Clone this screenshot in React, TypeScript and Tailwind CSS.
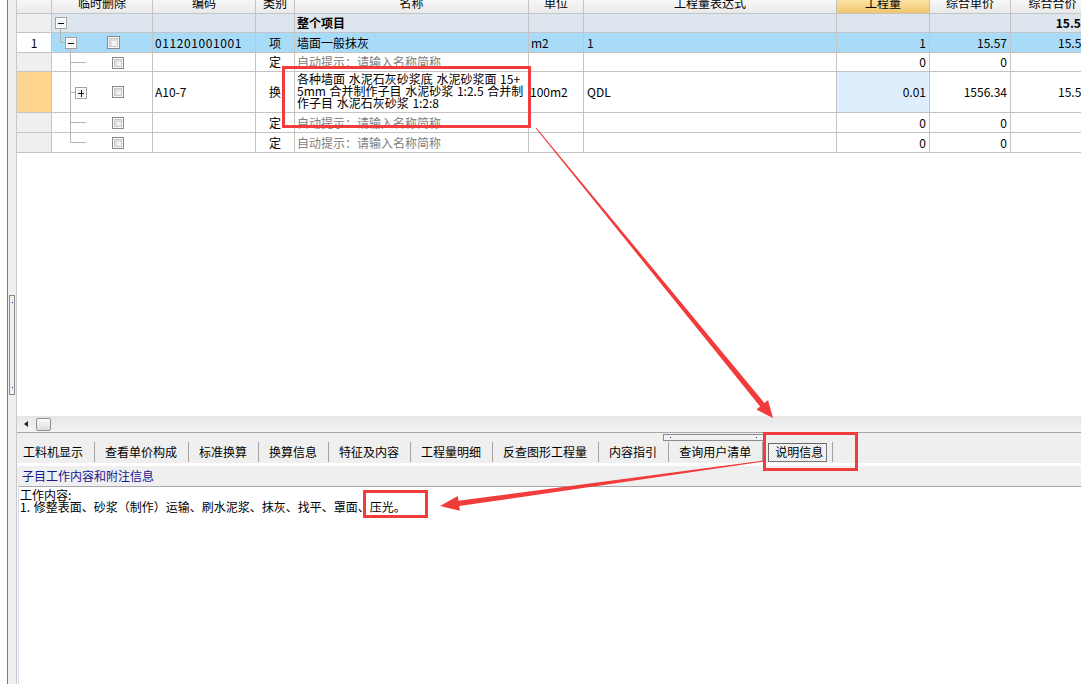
import React from "react";
import clsx from "clsx";

const W = [
  "w-[35px]",
  "w-[101px]",
  "w-[103px]",
  "w-[39px]",
  "w-[234px]",
  "w-[55px]",
  "w-[253px]",
  "w-[93px]",
  "w-[81px]",
  "w-[84px]",
];

const HEAD = ["", "临时删除", "编码", "类别", "名称", "单位", "工程量表达式", "工程量", "综合单价", "综合合价"];

const TABS = ["工料机显示", "查看单价构成", "标准换算", "换算信息", "特征及内容", "工程量明细", "反查图形工程量", "内容指引", "查询用户清单"];

function C({ i, className, children }: { i: number; className?: string; children?: React.ReactNode }) {
  return (
    <div className={clsx("shrink-0 h-full border-r border-[#c4c4c4] flex items-center overflow-hidden whitespace-nowrap", W[i], className)}>
      {children}
    </div>
  );
}

function Box({ x, y, plus }: { x: number; y: number; plus?: boolean }) {
  return (
    <g>
      <rect x={x + 0.5} y={y + 0.5} width={11} height={11} fill="#f3f3f3" stroke="#a2a2a2" />
      <rect x={x + 1.5} y={y + 1.5} width={9} height={9} fill="none" stroke="#ffffff" />
      <line x1={x + 3} x2={x + 9} y1={y + 6.5} y2={y + 6.5} stroke="#111" />
      {plus && <line x1={x + 6.5} x2={x + 6.5} y1={y + 3} y2={y + 10} stroke="#111" />}
    </g>
  );
}

function Check({ x, y, s = 12 }: { x: number; y: number; s?: number }) {
  return (
    <g>
      <rect x={x + 0.5} y={y + 0.5} width={s - 1} height={s - 1} fill="#f7f7f7" stroke="#8a8a8a" />
      <rect x={x + 2.5} y={y + 2.5} width={s - 5} height={s - 5} fill="#dedede" stroke="#c8c8c8" />
      <rect x={x + 5} y={y + 5} width={s - 8} height={s - 8} fill="#f2f2f2" />
    </g>
  );
}

// tree / checkbox drawing in the 临时删除 column
function Tree({ row, h }: { row: number; h: number }) {
  const line = "#b4b4b4";
  return (
    <svg width={101} height={h} className="block">
      {row === 0 && (
        <>
          <line x1={8.5} x2={8.5} y1={14} y2={h} stroke={line} />
          <Box x={3} y={3} />
        </>
      )}
      {row === 1 && (
        <>
          <line x1={8.5} x2={8.5} y1={0} y2={9.5} stroke={line} />
          <line x1={8.5} x2={13} y1={9.5} y2={9.5} stroke={line} />
          <line x1={18.5} x2={18.5} y1={15} y2={h} stroke={line} />
          <Box x={13} y={4} />
          <Check x={55} y={3} s={13} />
        </>
      )}
      {(row === 2 || row === 4 || row === 5) && (
        <>
          <line x1={18.5} x2={18.5} y1={0} y2={row === 5 ? 9.5 : h} stroke={line} />
          <line x1={18.5} x2={34} y1={9.5} y2={9.5} stroke={line} />
          <Check x={60} y={4} />
        </>
      )}
      {row === 3 && (
        <>
          <line x1={18.5} x2={18.5} y1={0} y2={h} stroke={line} />
          <line x1={18.5} x2={23} y1={20.5} y2={20.5} stroke={line} />
          <Box x={23} y={15} plus />
          <Check x={60} y={14} />
        </>
      )}
    </svg>
  );
}

function arrow(x1: number, y1: number, x2: number, y2: number, w0: number, w1: number, hl: number, hw: number) {
  const dx = x2 - x1;
  const dy = y2 - y1;
  const L = Math.hypot(dx, dy);
  const ux = dx / L;
  const uy = dy / L;
  const nx = -uy;
  const ny = ux;
  const bx = x2 - ux * hl;
  const by = y2 - uy * hl;
  const p = [
    [x1 + (nx * w0) / 2, y1 + (ny * w0) / 2],
    [bx + (nx * w1) / 2, by + (ny * w1) / 2],
    [bx + (nx * hw) / 2, by + (ny * hw) / 2],
    [x2, y2],
    [bx - (nx * hw) / 2, by - (ny * hw) / 2],
    [bx - (nx * w1) / 2, by - (ny * w1) / 2],
    [x1 - (nx * w0) / 2, y1 - (ny * w0) / 2],
  ];
  return p.map((q) => q.map((v) => v.toFixed(1)).join(",")).join(" ");
}

const hint = "自动提示：请输入名称简称";

export default function App() {
  return (
    <div className="relative w-[1081px] h-[684px] overflow-hidden bg-white flex text-[12px] text-black font-['Noto_Sans_CJK_SC',sans-serif]">
      <div className="w-[7px] shrink-0 bg-white" />
      <div className="w-[10px] shrink-0 border-l border-r border-l-[#7c7c7c] border-r-[#c9c9c9] bg-[#efefef] pt-[295px] px-[1px]">
        <div className="h-[100px] border border-[#8a8a8a] bg-[#f0f0f0] flex flex-col justify-between items-center py-[6px]">
          <span className="w-[1px] h-[1px] bg-[#1a1aa0]" />
          <span className="w-[1px] h-[1px] bg-[#1a1aa0]" />
        </div>
      </div>

      <div className="flex-1 min-w-0 flex flex-col">
        {/* grid */}
        <div className="h-[416px] shrink-0 bg-white overflow-hidden">
          <div className="w-[1078px]">
            <div className="flex h-[14px] border-b border-[#c4c4c4] bg-linear-to-b from-[#f8f8f8] to-[#e9e9e9]">
              {HEAD.map((t, i) => (
                <C key={i} i={i} className={clsx("items-start justify-center", i === 7 && "bg-linear-to-b from-[#fae3a6] to-[#f1c56a]")}>
                  <span className="leading-[12px] -mt-[3px]">{t}</span>
                </C>
              ))}
            </div>

            {/* 整个项目 */}
            <div className="flex h-[19px] border-b border-[#c4c4c4] bg-[#dde5ef]">
              <C i={0} className="bg-[#efefef]" />
              <C i={1}>
                <Tree row={0} h={18} />
              </C>
              <C i={2} />
              <C i={3} />
              <C i={4} className="pl-[2px] font-bold">整个项目</C>
              <C i={5} />
              <C i={6} />
              <C i={7} />
              <C i={8} />
              <C i={9} className="justify-end pr-[6px] font-bold">15.57</C>
            </div>

            {/* 清单 */}
            <div className="flex h-[20px] border-b border-[#c4c4c4] bg-[#a8dbf8]">
              <C i={0} className="bg-white justify-center">1</C>
              <C i={1}>
                <Tree row={1} h={19} />
              </C>
              <C i={2} className="pl-[2px] tracking-[0.6px]">011201001001</C>
              <C i={3} className="justify-center">项</C>
              <C i={4} className="pl-[2px]">墙面一般抹灰</C>
              <C i={5} className="pl-[2px]">m2</C>
              <C i={6} className="pl-[3px]">1</C>
              <C i={7} className="justify-end pr-[3px]">1</C>
              <C i={8} className="justify-end pr-[3px]">15.57</C>
              <C i={9} className="justify-end pr-[6px]">15.57</C>
            </div>

            <div className="flex h-[19px] border-b border-[#c4c4c4]">
              <C i={0} className="bg-[#efefef]" />
              <C i={1}>
                <Tree row={2} h={18} />
              </C>
              <C i={2} />
              <C i={3} className="justify-center">定</C>
              <C i={4} className="pl-[2px] text-[#808080]">{hint}</C>
              <C i={5} />
              <C i={6} />
              <C i={7} className="justify-end pr-[3px]">0</C>
              <C i={8} className="justify-end pr-[3px]">0</C>
              <C i={9} />
            </div>

            <div className="flex h-[41px] border-b border-[#c4c4c4]">
              <C i={0} className="bg-[#fed690]" />
              <C i={1}>
                <Tree row={3} h={40} />
              </C>
              <C i={2} className="pl-[2px]">A10-7</C>
              <C i={3} className="justify-center">换</C>
              <C i={4} className="pl-[2px] items-start pt-[1px]">
                <div className="leading-[12px] [word-spacing:1px]">
                  <div>各种墙面 水泥石灰砂浆底 水泥砂浆面 15+</div>
                  <div>5mm 合并制作子目 水泥砂浆 1:2.5 合并制</div>
                  <div>作子目 水泥石灰砂浆 1:2:8</div>
                </div>
              </C>
              <C i={5} className="pl-[1px]">100m2</C>
              <C i={6} className="pl-[3px]">QDL</C>
              <C i={7} className="justify-end pr-[3px] bg-[#deeefd]">0.01</C>
              <C i={8} className="justify-end pr-[3px]">1556.34</C>
              <C i={9} className="justify-end pr-[6px]">15.57</C>
            </div>

            {[4, 5].map((r) => (
              <div key={r} className="flex h-[20px] border-b border-[#c4c4c4]">
                <C i={0} className="bg-[#efefef]" />
                <C i={1}>
                  <Tree row={r} h={19} />
                </C>
                <C i={2} />
                <C i={3} className="justify-center">定</C>
                <C i={4} className="pl-[2px] text-[#808080]">{hint}</C>
                <C i={5} />
                <C i={6} />
                <C i={7} className="justify-end pr-[3px]">0</C>
                <C i={8} className="justify-end pr-[3px]">0</C>
                <C i={9} />
              </div>
            ))}
          </div>
        </div>

        {/* horizontal scrollbar */}
        <div className="h-[16px] shrink-0 flex items-center bg-linear-to-b from-[#e6e6e6] to-[#f3f3f3] pl-[7px]">
          <span className="w-0 h-0 border-y-[3px] border-y-transparent border-r-[4px] border-r-[#222]" />
          <div className="ml-[8px] w-[15px] h-[13px] rounded-[2px] border border-[#8e8e8e] bg-linear-to-b from-[#fdfdfd] to-[#dcdcdc]" />
        </div>
        <div className="h-[1px] shrink-0 bg-[#a8a8a8]" />

        {/* tabs */}
        <div className="h-[30px] shrink-0 bg-[#efefef] flex flex-col">
          <div className="mt-[1px] ml-[646px] w-[101px] h-[7px] border border-[#8a8a8a] bg-[#f2f2f2] flex items-center justify-between px-[6px]">
            <span className="w-[1px] h-[1px] bg-[#1a1aa0]" />
            <span className="w-[1px] h-[1px] bg-[#1a1aa0]" />
          </div>
          <div className="h-[22px] flex items-center pl-[6px]">
            {TABS.map((t, i) => (
              <React.Fragment key={t}>
                <span className="leading-[14px]">{t}</span>
                <span className={clsx("ml-[11px] w-[1px] h-[20px] bg-[#a4a4a4]", i === TABS.length - 1 ? "mr-[5px]" : "mr-[10px]")} />
              </React.Fragment>
            ))}
            <div className="h-[19px] flex items-center pl-[6px] pr-[3px] border border-[#7a7a7a] border-t-[#6a6a6a] border-l-[#6a6a6a] bg-[repeating-conic-gradient(#ffffff_0_25%,#e2e2e2_0_50%)] bg-[length:2px_2px]">
              说明信息
            </div>
            <span className="ml-[5px] w-[1px] h-[20px] bg-[#a4a4a4]" />
          </div>
        </div>
        <div className="h-[3px] shrink-0 bg-white" />

        {/* info header */}
        <div className="h-[20px] shrink-0 bg-[#efefef] flex items-center pl-[5px] text-[#161690]">子目工作内容和附注信息</div>

        {/* content */}
        <div className="flex-1 border-t border-[#a8a8a8] ml-[1px] border-l border-l-[#dad8ee] pl-[1px] pt-[2px] leading-[12px] [word-spacing:1px]">
          <div>工作内容:</div>
          <div>1. 修整表面、砂浆（制作）运输、刷水泥浆、抹灰、找平、罩面、压光。</div>
        </div>
      </div>

      {/* annotations */}
      <svg className="absolute left-0 top-0 pointer-events-none" width={1081} height={684}>
        <rect x={283.5} y={67.5} width={246} height={59} fill="none" stroke="#f23b3b" strokeWidth={3} />
        <rect x={764.5} y={433.5} width={92} height={36} fill="none" stroke="#f23b3b" strokeWidth={3} />
        <rect x={364.5} y={491.5} width={62} height={25} fill="none" stroke="#f23b3b" strokeWidth={3} />
        <polygon points={arrow(536, 128, 773, 418, 1, 5.5, 17, 15)} fill="#f23b3b" />
        <polygon points={arrow(764, 461, 440, 506, 1, 5.5, 19, 15)} fill="#f23b3b" />
      </svg>
    </div>
  );
}
